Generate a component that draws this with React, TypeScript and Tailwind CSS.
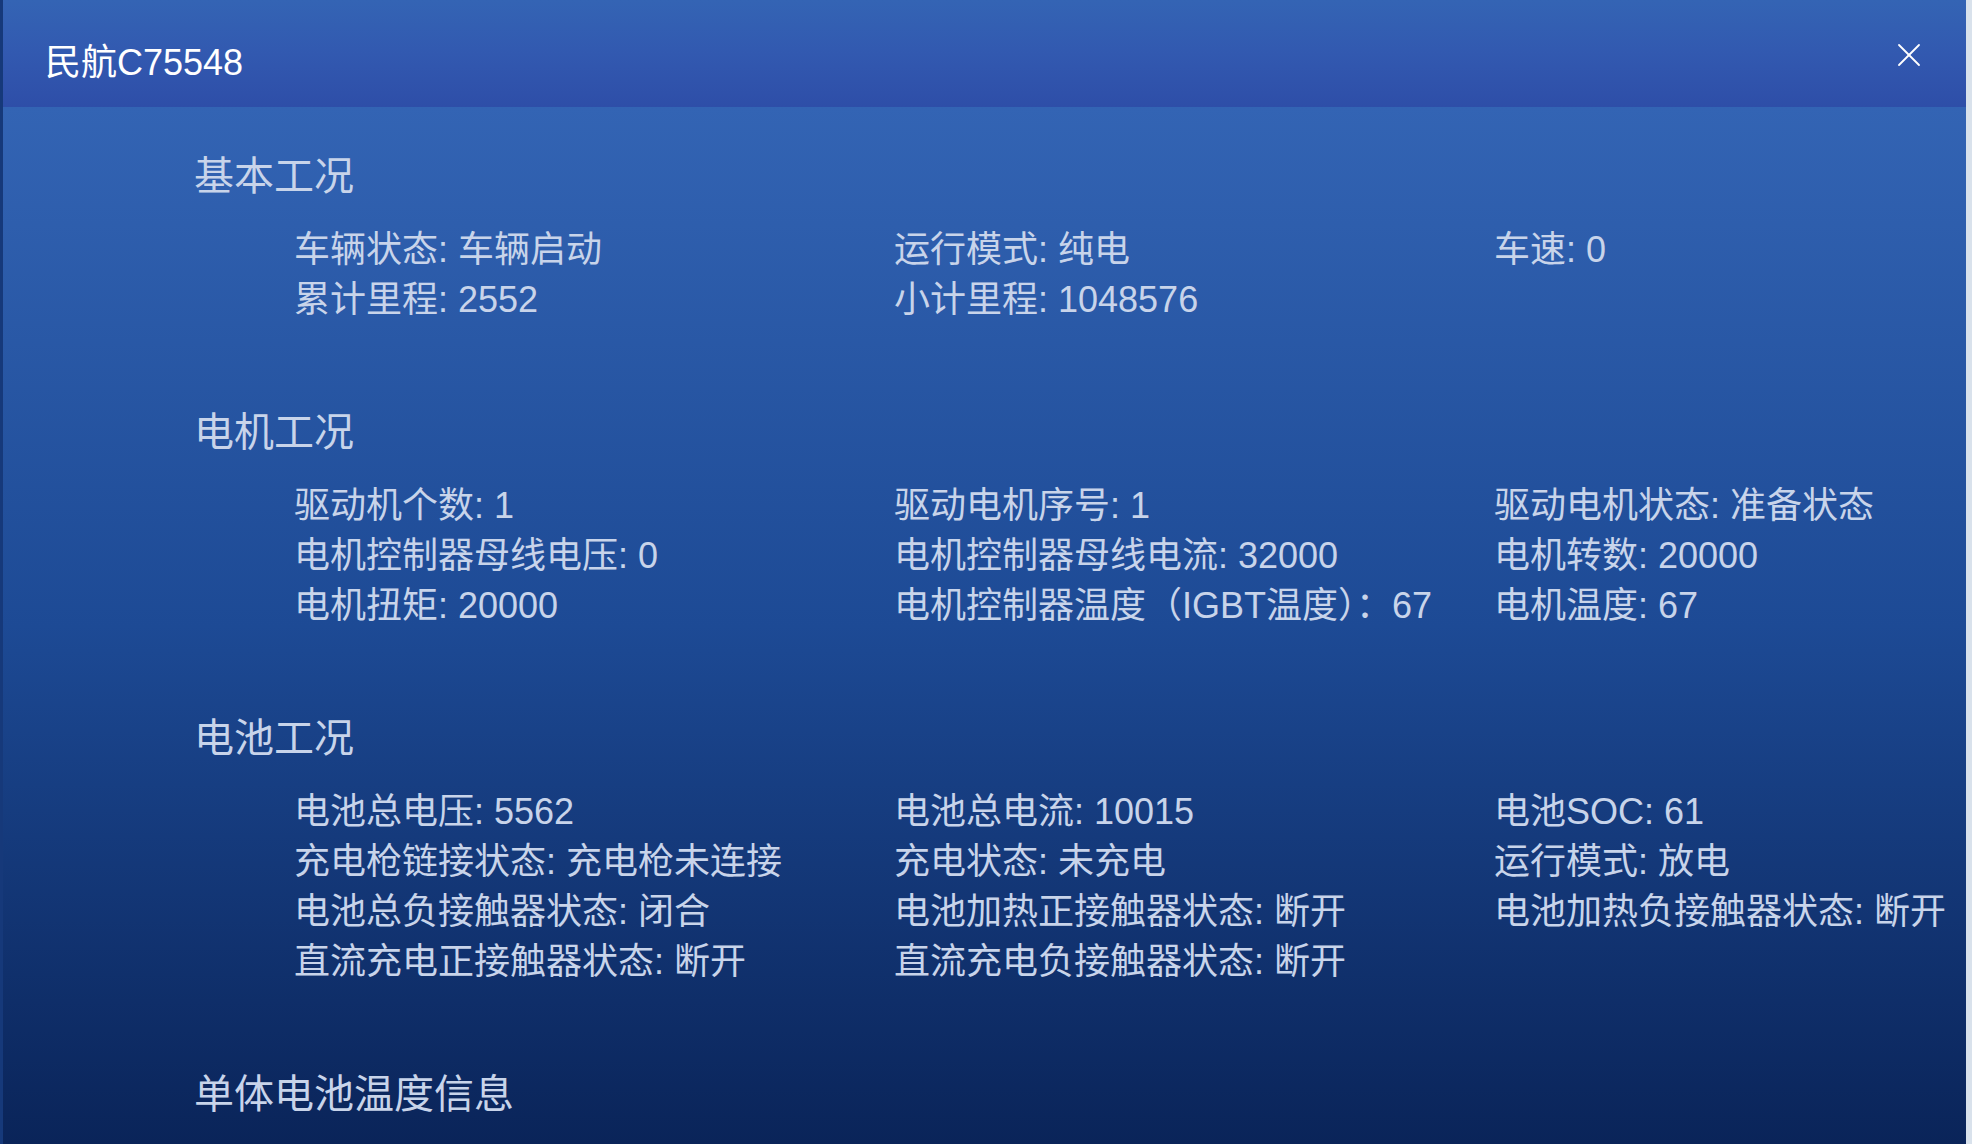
import { X } from "lucide-react";

type Section = {
  title: string;
  items: string[];
};

const sections: Section[] = [
  {
    title: "基本工况",
    items: ["车辆状态: 车辆启动", "运行模式: 纯电", "车速: 0", "累计里程: 2552", "小计里程: 1048576"],
  },
  {
    title: "电机工况",
    items: [
      "驱动机个数: 1",
      "驱动电机序号: 1",
      "驱动电机状态: 准备状态",
      "电机控制器母线电压: 0",
      "电机控制器母线电流: 32000",
      "电机转数: 20000",
      "电机扭矩: 20000",
      "电机控制器温度（IGBT温度）：67",
      "电机温度: 67",
    ],
  },
  {
    title: "电池工况",
    items: [
      "电池总电压: 5562",
      "电池总电流: 10015",
      "电池SOC: 61",
      "充电枪链接状态: 充电枪未连接",
      "充电状态: 未充电",
      "运行模式: 放电",
      "电池总负接触器状态: 闭合",
      "电池加热正接触器状态: 断开",
      "电池加热负接触器状态: 断开",
      "直流充电正接触器状态: 断开",
      "直流充电负接触器状态: 断开",
    ],
  },
];

const font = { fontFamily: '"Liberation Sans", "Noto Sans CJK SC", sans-serif' };

export default function App() {
  return (
    <div className="flex w-[1972px] h-[1144px] overflow-hidden" style={font}>
      <div className="w-[3px] bg-[#16397a]" />
      <div className="flex-1 flex flex-col min-w-0">
        <div className="h-[107px] flex items-start justify-between pl-[42px] pr-[37px] bg-gradient-to-b from-[#3464b4] via-[#3259b0] to-[#2e4ea8]">
          <span className="mt-[45px] text-[36px] leading-none text-white">民航C75548</span>
          <X className="mt-[35px] w-[40px] h-[40px] text-white" strokeWidth={1.1} />
        </div>
        <div className="flex-1 flex flex-col gap-[79px] pt-[41px] pl-[191px] bg-gradient-to-b from-[#3364b4] via-[#1d4a95] to-[#0a2459] text-[#c8d4ea]">
          {sections.map((s) => (
            <div key={s.title}>
              <div className="text-[40px] leading-[56px]">{s.title}</div>
              <div className="mt-[21px] pl-[100px] grid grid-cols-[600px_600px_1fr] text-[36px] leading-[50px]">
                {s.items.map((it, i) => (
                  <span key={i} className="whitespace-nowrap">
                    {it}
                  </span>
                ))}
              </div>
            </div>
          ))}
          <div className="text-[40px] leading-[56px]">单体电池温度信息</div>
        </div>
      </div>
      <div className="w-[6px] bg-[#d9e2ec]" />
    </div>
  );
}
